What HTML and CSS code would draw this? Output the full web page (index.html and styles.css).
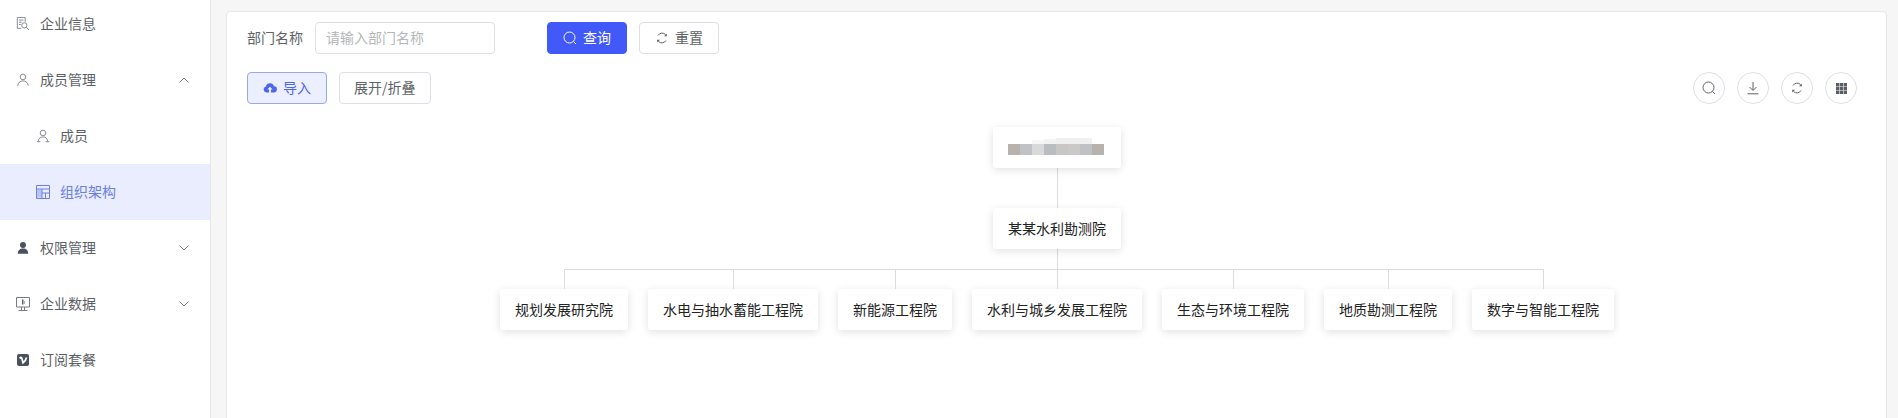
FILE: index.html
```html
<!DOCTYPE html>
<html lang="zh-CN">
<head>
<meta charset="utf-8">
<title>组织架构</title>
<link rel="stylesheet" href="styles.css">
</head>
<body>
<div class="app">
  <aside class="sidebar">
    <a class="menu-item">
      <svg class="icon" viewBox="0 0 16 16"><path d="M10.500 5.500V.5h-9v12.500h4.500M3.500 3.500h5M3.500 6h3M3.500 8.500h2"/><circle cx="9.500" cy="9.500" r="3"/><path d="M11.800 11.800l3 3"/></svg>
      <span class="label">企业信息</span>
    </a>
    <a class="menu-item">
      <svg class="icon" viewBox="0 0 16 16"><circle cx="8" cy="4.500" r="3.200"/><path d="M2 14.500c.3-3.400 2.700-5.500 6-5.500s5.700 2.100 6 5.500"/></svg>
      <span class="label">成员管理</span>
      <svg class="chevron" viewBox="0 0 10 6"><path d="M.5 5.500L5 1l4.500 4.500"/></svg>
    </a>
    <a class="menu-item sub">
      <svg class="icon" viewBox="0 0 16 16"><circle cx="8" cy="4.500" r="3.200"/><path d="M2.500 14c.4-3 2.600-5 5.500-5s5.100 2 5.500 5M1 14.500h4M11 14.500h4"/></svg>
      <span class="label">成员</span>
    </a>
    <a class="menu-item sub active">
      <svg class="icon" viewBox="0 0 14 14"><path class="tint" d="M1 4.500h5v8H1z"/><path d="M.5.500h13v13H.5zM.5 4h13M6 4v9.500M6 8h7.500M9.500 8v5.500"/></svg>
      <span class="label">组织架构</span>
    </a>
    <a class="menu-item">
      <svg class="icon solid" viewBox="0 0 16 16"><circle cx="8" cy="4.500" r="3.400"/><path d="M2 14.500c0-3.800 2.400-6 6-6s6 2.200 6 6z"/></svg>
      <span class="label">权限管理</span>
      <svg class="chevron" viewBox="0 0 10 6"><path d="M.5.500L5 5l4.500-4.500"/></svg>
    </a>
    <a class="menu-item">
      <svg class="icon" viewBox="0 0 14 14"><path d="M.5.500h13v9.500H.5zM5.500 10v3M8.500 10v3M2.500 13.500h9"/><path class="dot" d="M6 2.500h1.500v5H6z"/><path class="dot light" d="M7.500 4h1.500v3H7.500z"/></svg>
      <span class="label">企业数据</span>
      <svg class="chevron" viewBox="0 0 10 6"><path d="M.5.500L5 5l4.500-4.500"/></svg>
    </a>
    <a class="menu-item">
      <svg class="icon vimeo" viewBox="0 0 14 14"><rect x="1" y="1" width="12" height="12" rx="2"/><path d="M3.500 5.300c1.400-1.100 2-1 2.300 0L7 9.800c1.500-1.200 3.200-3.400 3.400-5.300"/></svg>
      <span class="label">订阅套餐</span>
    </a>
  </aside>

  <main class="main">
    <section class="card">
      <form class="search-form">
        <label class="field-label" for="dept">部门名称</label>
        <input class="text-input" id="dept" type="text" placeholder="请输入部门名称">
        <button class="btn btn-primary btn-query" type="button">
          <svg class="btn-icon" viewBox="0 0 14 14"><circle cx="6.500" cy="6.500" r="5.500"/><path d="M10.500 10.500l2.500 2.500"/></svg>
          <span>查询</span>
        </button>
        <button class="btn" type="button">
          <svg class="btn-icon" viewBox="0 0 14 14"><path d="M3 4.500A4.800 4.800 0 0 1 10.500 3.500M11 9.500A4.800 4.800 0 0 1 3.500 10.500"/><path class="head" d="M11.800 2.500v2.800H9zM2.200 11.500V8.700H5z"/></svg>
          <span>重置</span>
        </button>
      </form>

      <div class="toolbar">
        <button class="btn btn-plain" type="button">
          <svg class="btn-icon fill" viewBox="0 0 14 14"><path d="M3.500 11.500a3 3 0 0 1-.6-5.900 4.200 4.200 0 0 1 8.100-.3 3.100 3.100 0 0 1-.4 6.200H8V8.500h1.600L7 5.800 4.400 8.500H6v3z"/></svg>
          <span>导入</span>
        </button>
        <button class="btn btn-wide" type="button"><span>展开/折叠</span></button>
        <div class="tools">
          <button class="circle" type="button" aria-label="搜索"><svg viewBox="0 0 14 14"><circle cx="6.500" cy="6.500" r="5.500"/><path d="M10.500 10.500l2.500 2.500"/></svg></button>
          <button class="circle" type="button" aria-label="下载"><svg viewBox="0 0 14 14"><path d="M7 1v8M3.500 6L7 9.500 10.500 6M1.500 12.800h11"/></svg></button>
          <button class="circle" type="button" aria-label="刷新"><svg viewBox="0 0 14 14"><path d="M3 4.500A4.800 4.800 0 0 1 10.500 3.500M11 9.500A4.800 4.800 0 0 1 3.500 10.500"/><path class="head" d="M11.800 2.500v2.800H9zM2.200 11.500V8.700H5z"/></svg></button>
          <button class="circle" type="button" aria-label="列"><svg class="grid" viewBox="0 0 11 11"><path d="M0 0h3.300v3.300H0zM3.850 0h3.300v3.300h-3.300zM7.700 0H11v3.300H7.700zM0 3.850h3.300v3.300H0zM3.850 3.850h3.300v3.300h-3.300zM7.700 3.850H11v3.300H7.700zM0 7.700h3.300V11H0zM3.850 7.700h3.300V11h-3.300zM7.700 7.700H11V11H7.700z"/></svg></button>
        </div>
      </div>

      <div class="tree">
        <div class="node root-node">
          <div class="mosaic" aria-hidden="true">
            <i class="m m1"></i><i class="m m2"></i><i class="m m3"></i><i class="m m4"></i><i class="m m5"></i><i class="m m6"></i><i class="m m7"></i><i class="m m1"></i>
          </div>
        </div>
        <div class="stem"></div>
        <div class="node">某某水利勘测院</div>
        <div class="stem short"></div>
        <ul class="branches">
          <li class="branch"><div class="node">规划发展研究院</div></li>
          <li class="branch"><div class="node">水电与抽水蓄能工程院</div></li>
          <li class="branch"><div class="node">新能源工程院</div></li>
          <li class="branch"><div class="node">水利与城乡发展工程院</div></li>
          <li class="branch"><div class="node">生态与环境工程院</div></li>
          <li class="branch"><div class="node">地质勘测工程院</div></li>
          <li class="branch"><div class="node">数字与智能工程院</div></li>
        </ul>
      </div>
    </section>
  </main>
</div>
</body>
</html>
```

FILE: styles.css
```css
* { box-sizing: border-box; }
html, body { margin: 0; padding: 0; height: 418px; overflow: hidden; }
body {
  font-family: "Noto Sans CJK SC", "Liberation Sans", sans-serif;
  font-size: 14px;
  color: #606266;
  background: #f6f6f7;
}
.app { display: flex; height: 418px; }

.sidebar {
  width: 211px;
  flex: none;
  background: #fff;
  border-right: 1px solid #e6e6e6;
  height: 100%;
  overflow: hidden;
}
.menu-item {
  display: flex;
  align-items: center;
  height: 56px;
  padding-left: 16px;
  color: #5c5f66;
  line-height: 20px;
}
.menu-item:first-child { margin-top: -4px; }
.menu-item.sub { padding-left: 36px; }
.menu-item.active { background: #e9edfd; color: #6b80e2; }
.icon {
  width: 14px;
  height: 14px;
  margin-right: 10px;
  flex: none;
  fill: none;
  stroke: #777a82;
  stroke-width: 1;
}
.active .icon { stroke: #6b80e2; }
.icon .tint { fill: #b9c4f3; stroke: none; }
.icon .dot { fill: #5c6370; stroke: none; }
.icon .dot.light { fill: #a9b4c6; }
.icon.solid { fill: #4a5060; stroke: none; }
.icon.vimeo { stroke: none; fill: #4a5060; }
.icon.vimeo path { fill: none; stroke: #fff; stroke-width: 1.800; }
.label { flex: none; margin-top: -2px; }
.chevron {
  width: 10px;
  height: 6px;
  margin-left: auto;
  margin-right: 21px;
  fill: none;
  stroke: #777a82;
  stroke-width: 1;
}

.main {
  flex: 1;
  min-width: 0;
  padding: 11px 11px 0 15px;
}
.card {
  height: 420px;
  background: #fff;
  border: 1px solid #e8e8e8;
  border-radius: 4px 4px 0 0;
  padding: 10px 19px 0 20px;
}
.search-form { display: flex; align-items: center; height: 32px; }
.field-label { width: 68px; flex: none; color: #606266; padding-bottom: 2px; }
.text-input {
  width: 180px;
  height: 32px;
  border: 1px solid #dcdfe6;
  border-radius: 4px;
  padding: 0 10px 2px;
  font: inherit;
  color: #606266;
  outline: none;
}
.text-input::placeholder { color: #b4b6bb; opacity: 1; }

.btn {
  display: inline-flex;
  align-items: center;
  justify-content: center;
  gap: 6px;
  height: 32px;
  padding: 0 15px;
  background: #fff;
  border: 1px solid #dcdfe6;
  border-radius: 4px;
  font: inherit;
  color: #606266;
}
.btn span { margin-top: -2px; }
.btn-wide { padding: 0 14px; }
.btn-query { margin-left: 52px; }
.btn-query + .btn { margin-left: 12px; }
.btn-primary { background: #4159f9; border-color: #4159f9; color: #fff; }
.btn-plain { background: #ecefff; border-color: #9aa7ea; color: #4f66ea; }
.btn-icon {
  width: 14px;
  height: 14px;
  fill: none;
  stroke: currentColor;
  stroke-width: 1;
}
.btn-icon .head { fill: currentColor; stroke: none; }
.btn-icon.fill { fill: currentColor; stroke: none; }

.toolbar { display: flex; align-items: center; gap: 12px; margin-top: 18px; height: 32px; }
.tools { display: flex; gap: 12px; margin-left: auto; margin-right: 10px; }
.circle {
  width: 32px;
  height: 32px;
  padding: 0;
  display: flex;
  align-items: center;
  justify-content: center;
  background: #fff;
  border: 1px solid #dcdfe6;
  border-radius: 50%;
}
.circle svg {
  width: 14px;
  height: 14px;
  fill: none;
  stroke: #606266;
  stroke-width: 1;
}
.circle svg .head { fill: #606266; stroke: none; }
.circle svg.grid { width: 11px; height: 11px; fill: #5a5d64; stroke: none; }

.tree {
  display: flex;
  flex-direction: column;
  align-items: center;
  margin-top: 23px;
}
.node {
  height: 41px;
  display: flex;
  align-items: center;
  padding: 0 15px 2px;
  background: #fff;
  border-radius: 3px;
  box-shadow: 0 2px 8px rgba(0, 0, 0, 0.12);
  color: #222;
  white-space: nowrap;
  position: relative;
}
.root-node { width: 128px; padding-bottom: 0; }
.mosaic { display: flex; margin-top: 4px; }
.m { display: block; width: 12px; height: 11px; }
.m1 { background: #b8b2ae; }
.m2 { background: #c0c2c5; }
.m3 { background: #d9d9d9; box-shadow: 0 -4px 0 #f6f6f6; }
.m4 { background: #b9bcc0; box-shadow: 0 -5px 0 #f2f2f2; }
.m5 { background: #c9c7c5; box-shadow: 0 -6px 0 #efefef; }
.m6 { background: #cbc9c7; box-shadow: 0 -6px 0 #efefef; }
.m7 { background: #bfc1c4; box-shadow: 0 -6px 0 #f0f0f0; }

.stem { width: 1px; height: 40px; background: #dcdcdc; }
.stem.short { height: 20px; }
.branches { display: flex; list-style: none; margin: 0; padding: 0; }
.branch {
  position: relative;
  padding: 20px 10px 0;
}
.branch::before {
  content: "";
  position: absolute;
  top: 0;
  left: 0;
  right: 0;
  height: 1px;
  background: #dcdcdc;
}
.branch::after {
  content: "";
  position: absolute;
  top: 0;
  left: 50%;
  width: 1px;
  height: 20px;
  background: #dcdcdc;
}
.branch:first-child::before { left: 50%; }
.branch:last-child::before { right: 50%; }
```
